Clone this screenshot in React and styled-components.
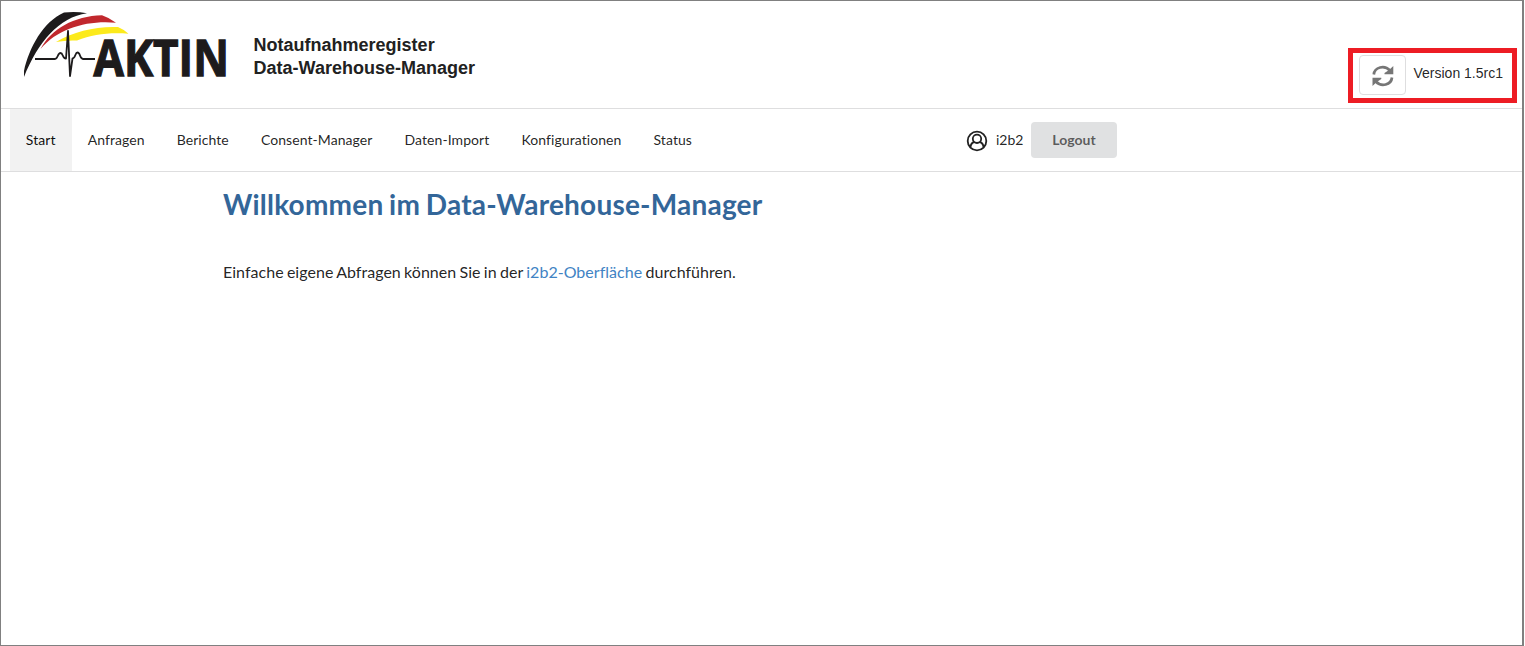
import React from "react";
import styled, { createGlobalStyle } from "styled-components";

const GlobalStyle = createGlobalStyle`
  *, *::before, *::after { box-sizing: border-box; }
  body { margin: 0; background: #fff; overflow: hidden; }
`;

const Page = styled.div`
  width: 1524px;
  height: 646px;
  border: 1px solid #808080;
  border-right-width: 2px;
  background: #fff;
  color: rgba(0, 0, 0, 0.87);
  font-family: Lato, sans-serif;
  font-size: 14px;
`;

const Header = styled.header`
  display: flex;
  align-items: flex-start;
  height: 107px;
`;

const Logo = styled.svg`
  display: block;
  flex: none;
  width: 212px;
  height: 90px;
  margin: 9px 0 0 22px;
  overflow: visible;
`;

const SiteTitle = styled.div`
  margin: 33px 0 0 18.6px;
  font: bold 18px/23px "Liberation Sans", Arial, sans-serif;
  color: #212121;
  white-space: nowrap;
`;

const VersionBox = styled.div`
  display: flex;
  align-items: flex-start;
  gap: 7.5px;
  width: 169px;
  height: 55px;
  margin: 47px 5px 0 auto;
  padding: 2px 0 0 6px;
  border: 5px solid #ed1c24;
`;

const RefreshButton = styled.button`
  display: flex;
  align-items: center;
  justify-content: center;
  flex: none;
  width: 47px;
  height: 40px;
  padding: 2px 0 0 0;
  border: 1px solid #dededf;
  border-radius: 4px;
  background: #fff;
`;

const Version = styled.span`
  margin-top: 10px;
  font: 14px/16px "Liberation Sans", Arial, sans-serif;
  white-space: nowrap;
`;

const Menu = styled.nav`
  display: flex;
  align-items: center;
  height: 64px;
  padding-left: 9px;
  border-top: 1px solid #dededf;
  border-bottom: 1px solid #dededf;
`;

const MenuItem = styled.a`
  display: flex;
  align-items: center;
  height: 100%;
  padding: 0 16.3px 2px 15.8px;
  background: ${(p) => (p.$active ? "#f2f2f2" : "transparent")};
  color: ${(p) => (p.$active ? "rgba(0,0,0,.95)" : "inherit")};
  letter-spacing: 0.07px;
  white-space: nowrap;
`;

const UserArea = styled.div`
  display: flex;
  align-items: center;
  width: 151px;
  margin: 0 405px 0 auto;
`;

const UserName = styled.span`
  margin-left: 8px;
  padding-bottom: 2px;
`;

const LogoutButton = styled.button`
  width: 86px;
  height: 36px;
  margin-left: auto;
  padding: 0;
  border: 0;
  border-radius: 4px;
  background: #e0e1e2;
  color: rgba(0, 0, 0, 0.6);
  font: bold 14px/14px Lato, sans-serif;
`;

const Content = styled.main`
  padding: 14px 0 0 222px;
`;

const Heading = styled.h1`
  margin: 0;
  color: #336699;
  font-size: 28px;
  line-height: 36px;
  font-weight: 700;
  letter-spacing: 0.21px;
  word-spacing: -1.3px;
`;

const Paragraph = styled.p`
  margin: 38px 0 0;
  font-size: 16px;
  line-height: 23px;
  letter-spacing: 0.03px;
  word-spacing: -0.84px;
`;

const Link = styled.a`
  color: #4183c4;
`;

const items = ["Start", "Anfragen", "Berichte", "Consent-Manager", "Daten-Import", "Konfigurationen", "Status"];

function AktinLogo() {
  return (
    <Logo viewBox="23 10 212 90" role="img" aria-label="AKTIN">
      <path d="M24 77 V71 C29 48 43 22 64 12.6 Q75 11 87 13.2 C59 17 38 42 24 77Z" fill="#1d1b1c" />
      <path d="M40.5 49 C51 29 74 16 102 15.2 Q109 17.5 116 22.7 C88 20 58 28 40.5 49Z" fill="#c1282d" />
      <path d="M56 42 C74 31 97 26 118 27 Q123 29 128.500 33.700 C109 32.500 93 34 77 40.500 Q66 40 56 42Z" fill="#fcea1c" />
      <path
        d="M35 59 H55 C58 59 57.500 53 60.500 53 C63.500 53 62 58.500 66 58.500 L68 31 L70 76 L72.500 58.500 C75.500 58.500 75 52.500 77.500 52.500 C80.500 52.500 79.500 59 83 59 H95"
        fill="none"
        stroke="#1d1b1c"
        strokeWidth="1.8"
        strokeLinejoin="round"
      />
      <text
        x="93.5"
        y="76.3"
        textLength="135.5"
        lengthAdjust="spacingAndGlyphs"
        fill="#1d1b1c"
        stroke="#1d1b1c"
        strokeWidth="1.3"
        fontFamily="Open Sans, sans-serif"
        fontSize="50"
        fontWeight="700"
      >
        AKTIN
      </text>
    </Logo>
  );
}

function RefreshIcon() {
  return (
    <svg width="22" height="22" viewBox="0 0 22 22" fill="none">
      <path d="M1.800 9.500 C2.500 2 12.500 -.5 18 5.500 M20 12.500 C19.300 20 9.300 22.300 3.800 16.500" stroke="#767676" strokeWidth="2.700" />
      <path d="M21.300 1 V9.300 H12.500 V8 L17 5Z M.5 21 V12.700 H9.300 V14 L4.800 17Z" fill="#767676" />
    </svg>
  );
}

function UserIcon() {
  return (
    <svg width="22" height="24" viewBox="0 -2 22 24" fill="none" stroke="#222" strokeWidth="1.8">
      <circle cx="11" cy="11" r="9.300" />
      <circle cx="11" cy="8.800" r="4.200" />
      <path d="M4.500 17.300 C4.700 14.500 6 12.500 8.300 12 M17.500 17.300 C17.300 14.500 16 12.500 13.700 12" />
    </svg>
  );
}

export default function App() {
  return (
    <>
      <GlobalStyle />
      <Page>
        <Header>
          <AktinLogo />
          <SiteTitle>
            Notaufnahmeregister
            <br />
            Data-Warehouse-Manager
          </SiteTitle>
          <VersionBox>
            <RefreshButton aria-label="Aktualisieren">
              <RefreshIcon />
            </RefreshButton>
            <Version>Version 1.5rc1</Version>
          </VersionBox>
        </Header>
        <Menu>
          {items.map((label, i) => (
            <MenuItem key={label} $active={i === 0}>
              {label}
            </MenuItem>
          ))}
          <UserArea>
            <UserIcon />
            <UserName>i2b2</UserName>
            <LogoutButton>Logout</LogoutButton>
          </UserArea>
        </Menu>
        <Content>
          <Heading>Willkommen im Data-Warehouse-Manager</Heading>
          <Paragraph>
            Einfache eigene Abfragen können Sie in der <Link>i2b2-Oberfläche</Link> durchführen.
          </Paragraph>
        </Content>
      </Page>
    </>
  );
}
